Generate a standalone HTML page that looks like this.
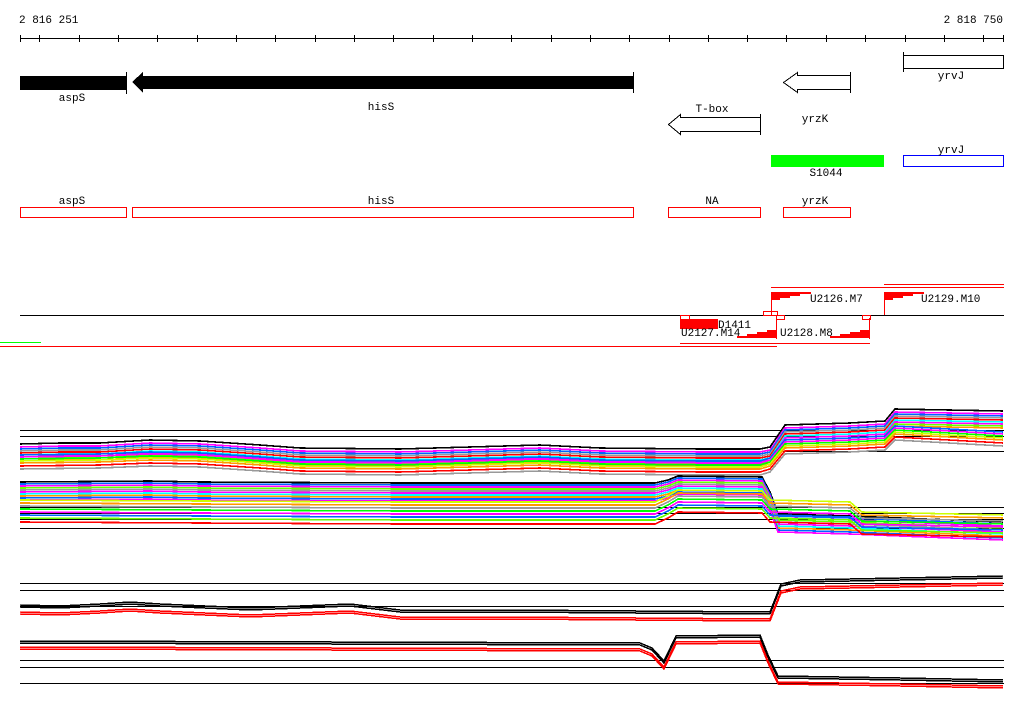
<!DOCTYPE html>
<html><head><meta charset="utf-8"><style>
html,body{margin:0;padding:0;background:#fff;width:1024px;height:714px;overflow:hidden}
svg{display:block}
text{font-family:"Liberation Mono","DejaVu Sans Mono",monospace;font-size:11px;fill:#000}
</style></head><body>
<svg width="1024" height="714" viewBox="0 0 1024 714" xmlns="http://www.w3.org/2000/svg" shape-rendering="crispEdges">
<defs>
<polyline id="p1" fill="none" stroke-width="1.6" points="20,447 60,446 100,446 150,443 200,444 260,448 300,451 400,452 540,448 600,451 700,452 760,452 770,450 785,428 850,426 885,424 895,412 1003,414"/>
<polyline id="p1w" fill="none" stroke-width="1.6" points="20,455 100,454 150,452 200,453 260,457 300,460 400,461 540,457 600,460 700,461 760,461 770,458 785,440 850,438 885,436 895,426 1003,432"/>
<polyline id="p2" fill="none" stroke-width="1.6" points="20,484 150,483 200,484 400,485 655,485 668,482 678,478 762,479 770,494 778,516 850,518 900,520 1003,524"/>
<polyline id="p2b" fill="none" stroke-width="1.6" points="20,500 200,501 400,502 655,502 668,496 678,490 762,491 770,500 850,502 862,512 1003,515"/>
<polyline id="p3" fill="none" stroke-width="1.5" points="20,605 60,606 100,604 130,602 160,604 250,608 300,606 350,604 400,610 500,610 770,612 781,584 800,580 900,578 1003,576"/>
<polyline id="p4" fill="none" stroke-width="1.5" points="20,641 640,643 652,648 664,661 676,636 760,635 768,655 778,676 900,678 1003,680"/>
</defs>
<text x="19" y="23">2 816 251</text>
<text x="1003" y="23" text-anchor="end">2 818 750</text>
<line x1="20" y1="38.5" x2="1004" y2="38.5" stroke="#000"/>
<g stroke="#000">
<line x1="20.5" y1="35" x2="20.5" y2="42"/><line x1="39.5" y1="35" x2="39.5" y2="42"/>
<line x1="79.5" y1="35" x2="79.5" y2="42"/><line x1="118.5" y1="35" x2="118.5" y2="42"/>
<line x1="157.5" y1="35" x2="157.5" y2="42"/><line x1="197.5" y1="35" x2="197.5" y2="42"/>
<line x1="236.5" y1="35" x2="236.5" y2="42"/><line x1="275.5" y1="35" x2="275.5" y2="42"/>
<line x1="315.5" y1="35" x2="315.5" y2="42"/><line x1="354.5" y1="35" x2="354.5" y2="42"/>
<line x1="393.5" y1="35" x2="393.5" y2="42"/><line x1="433.5" y1="35" x2="433.5" y2="42"/>
<line x1="472.5" y1="35" x2="472.5" y2="42"/><line x1="511.5" y1="35" x2="511.5" y2="42"/>
<line x1="551.5" y1="35" x2="551.5" y2="42"/><line x1="590.5" y1="35" x2="590.5" y2="42"/>
<line x1="669.5" y1="35" x2="669.5" y2="42"/><line x1="708.5" y1="35" x2="708.5" y2="42"/>
<line x1="747.5" y1="35" x2="747.5" y2="42"/><line x1="786.5" y1="35" x2="786.5" y2="42"/>
<line x1="826.5" y1="35" x2="826.5" y2="42"/><line x1="865.5" y1="35" x2="865.5" y2="42"/>
<line x1="905.5" y1="35" x2="905.5" y2="42"/><line x1="944.5" y1="35" x2="944.5" y2="42"/>
<line x1="983.5" y1="35" x2="983.5" y2="42"/><line x1="1003.5" y1="35" x2="1003.5" y2="42"/>
<line x1="629.5" y1="35" x2="629.5" y2="42"/>
</g>
<rect x="20" y="76" width="106" height="14" fill="#000"/>
<line x1="126.5" y1="72" x2="126.5" y2="94" stroke="#000"/>
<polygon points="132,82 143,72 143,76 633,76 633,89 143,89 143,93" fill="#000"/>
<line x1="633.5" y1="72" x2="633.5" y2="93" stroke="#000"/>
<text x="72" y="101" text-anchor="middle">aspS</text>
<text x="381" y="110" text-anchor="middle">hisS</text>
<polygon points="668.5,124.5 680.5,114.5 680.5,117.5 760.5,117.5 760.5,131.5 680.5,131.5 680.5,134.5" fill="none" stroke="#000"/>
<line x1="760.5" y1="114" x2="760.5" y2="135" stroke="#000"/>
<text x="712" y="112" text-anchor="middle">T-box</text>
<polygon points="783.5,82.5 797.5,72.5 797.5,75.5 850.5,75.5 850.5,89.5 797.5,89.5 797.5,92.5" fill="none" stroke="#000"/>
<line x1="850.5" y1="72" x2="850.5" y2="93" stroke="#000"/>
<text x="815" y="122" text-anchor="middle">yrzK</text>
<rect x="903.5" y="55.5" width="100" height="13" fill="none" stroke="#000"/>
<line x1="903.5" y1="52" x2="903.5" y2="72" stroke="#000"/>
<text x="951" y="79" text-anchor="middle">yrvJ</text>
<rect x="771" y="155" width="113" height="12" fill="#00ff00"/>
<text x="826" y="176" text-anchor="middle">S1044</text>
<rect x="903.5" y="155.5" width="100" height="11" fill="none" stroke="#0000ff"/>
<text x="951" y="153" text-anchor="middle">yrvJ</text>
<g fill="none" stroke="#ff0000">
<rect x="20.5" y="207.5" width="106" height="10"/>
<rect x="132.5" y="207.5" width="501" height="10"/>
<rect x="668.5" y="207.5" width="92" height="10"/>
<rect x="783.5" y="207.5" width="67" height="10"/>
</g>
<text x="72" y="204" text-anchor="middle">aspS</text>
<text x="381" y="204" text-anchor="middle">hisS</text>
<text x="712" y="204" text-anchor="middle">NA</text>
<text x="815" y="204" text-anchor="middle">yrzK</text>
<line x1="20" y1="315.5" x2="1004" y2="315.5" stroke="#000"/>
<g stroke="#ff0000" fill="none">
<line x1="884" y1="284.5" x2="1004" y2="284.5"/>
<line x1="771" y1="287.5" x2="1004" y2="287.5"/>
<line x1="680" y1="343.5" x2="870" y2="343.5"/>
<line x1="0" y1="346.5" x2="777" y2="346.5"/>
<line x1="771.5" y1="292" x2="771.5" y2="315"/>
<line x1="884.5" y1="292" x2="884.5" y2="315"/>
<line x1="776.5" y1="318" x2="776.5" y2="339"/>
<line x1="869.5" y1="318" x2="869.5" y2="339"/>
<rect x="763.5" y="311.5" width="14" height="4"/>
<rect x="776.5" y="315.5" width="8" height="4"/>
<rect x="862.5" y="315.5" width="8" height="4"/>
<rect x="680.5" y="315.5" width="9" height="4"/>
</g>
<line x1="0" y1="342.5" x2="41" y2="342.5" stroke="#00ff00"/>
<polygon points="771,292 811,292 811,294 800,294 800,296 790,296 790,298 780,298 780,300 771,300" fill="#ff0000"/>
<polygon points="884,292 924,292 924,294 913,294 913,296 903,296 903,298 893,298 893,300 884,300" fill="#ff0000"/>
<polygon points="777,330 777,338 737,338 737,336 747,336 747,334 757,334 757,332 767,332 767,330" fill="#ff0000"/>
<polygon points="870,330 870,338 830,338 830,336 840,336 840,334 850,334 850,332 860,332 860,330" fill="#ff0000"/>
<rect x="680" y="319" width="38" height="10" fill="#ff0000"/>
<text x="810" y="302">U2126.M7</text>
<text x="921" y="302">U2129.M10</text>
<text x="718" y="328">D1411</text>
<text x="681" y="336">U2127.M14</text>
<text x="780" y="336">U2128.M8</text>
<g stroke="#000"><line x1="20" y1="430.5" x2="1004" y2="430.5"/><line x1="20" y1="436.5" x2="1004" y2="436.5"/><line x1="770" y1="451.5" x2="1004" y2="451.5"/></g>
<use href="#p1" stroke="#000" transform="translate(0,-3)"/>
<use href="#p1" stroke="#ff00ff" transform="translate(0,0)"/>
<use href="#p1" stroke="#0066ff" transform="translate(0,2)"/>
<use href="#p1" stroke="#999" transform="translate(0,4)"/>
<use href="#p1" stroke="#ff0000" transform="translate(0,6)"/>
<use href="#p1" stroke="#00ffff" transform="translate(0,8)"/>
<use href="#p1" stroke="#ff00ff" transform="translate(0,10)"/>
<use href="#p1" stroke="#66ff00" transform="translate(0,12)"/>
<use href="#p1" stroke="#ff9900" transform="translate(0,14)"/>
<use href="#p1w" stroke="#0066ff" transform="translate(0,0)"/>
<use href="#p1w" stroke="#ff00ff" transform="translate(0,2)"/>
<use href="#p1w" stroke="#00ff00" transform="translate(0,4)"/>
<use href="#p1w" stroke="#ccff00" transform="translate(0,6)"/>
<use href="#p1w" stroke="#ff9900" transform="translate(0,8)"/>
<use href="#p1w" stroke="#ff0000" transform="translate(0,11)"/>
<use href="#p1w" stroke="#999" transform="translate(0,14)"/>
<g stroke="#000"><line x1="20" y1="507.5" x2="1004" y2="507.5"/><line x1="20" y1="513.5" x2="1004" y2="513.5"/><line x1="20" y1="519.5" x2="1004" y2="519.5"/><line x1="20" y1="528.5" x2="1004" y2="528.5"/></g>
<use href="#p2" stroke="#000" transform="translate(0,-2)"/>
<use href="#p2" stroke="#0066ff" transform="translate(0,0)"/>
<use href="#p2" stroke="#ff00ff" transform="translate(0,2)"/>
<use href="#p2" stroke="#66ff00" transform="translate(0,4)"/>
<use href="#p2" stroke="#999" transform="translate(0,6)"/>
<use href="#p2" stroke="#ff00ff" transform="translate(0,8)"/>
<use href="#p2" stroke="#00ffff" transform="translate(0,10)"/>
<use href="#p2" stroke="#ff9900" transform="translate(0,12)"/>
<use href="#p2" stroke="#0066ff" transform="translate(0,14)"/>
<use href="#p2" stroke="#ff00ff" transform="translate(0,16)"/>
<use href="#p2b" stroke="#ccff00" transform="translate(0,0)"/>
<use href="#p2b" stroke="#ff9900" transform="translate(0,3)"/>
<use href="#p2b" stroke="#999" transform="translate(0,6)"/>
<use href="#p2b" stroke="#00ff00" transform="translate(0,9)"/>
<use href="#p2b" stroke="#ff00ff" transform="translate(0,12)"/>
<use href="#p2b" stroke="#0066ff" transform="translate(0,15)"/>
<use href="#p2b" stroke="#66ff00" transform="translate(0,18)"/>
<use href="#p2b" stroke="#ff0000" transform="translate(0,22)"/>
<g stroke="#000"><line x1="20" y1="583.5" x2="1004" y2="583.5"/><line x1="20" y1="590.5" x2="1004" y2="590.5"/><line x1="20" y1="606.5" x2="1004" y2="606.5"/></g>
<use href="#p3" stroke="#000" transform="translate(0,0)"/>
<use href="#p3" stroke="#000" transform="translate(0,2)"/>
<use href="#p3" stroke="#ff0000" transform="translate(0,7)"/>
<use href="#p3" stroke="#ff0000" transform="translate(0,9)"/>
<g stroke="#000"><line x1="20" y1="660.5" x2="1004" y2="660.5"/><line x1="20" y1="667.5" x2="1004" y2="667.5"/><line x1="20" y1="683.5" x2="1004" y2="683.5"/></g>
<use href="#p4" stroke="#000" transform="translate(0,0)"/>
<use href="#p4" stroke="#000" transform="translate(0,2)"/>
<use href="#p4" stroke="#ff0000" transform="translate(0,6)"/>
<use href="#p4" stroke="#ff0000" transform="translate(0,8)"/>
</svg>
</body></html>
